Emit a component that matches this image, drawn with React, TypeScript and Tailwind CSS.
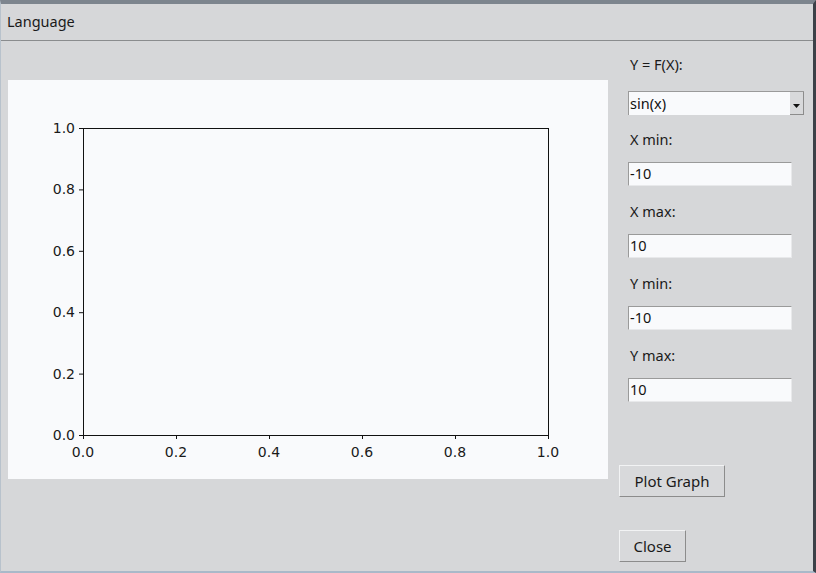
import React from 'react';

const font = { fontFamily: '"Noto Sans", "Open Sans", sans-serif' };

const yTicks = [
  { v: '1.0', y: 48 },
  { v: '0.8', y: 109.4 },
  { v: '0.6', y: 170.8 },
  { v: '0.4', y: 232.2 },
  { v: '0.2', y: 293.6 },
  { v: '0.0', y: 355 },
];

const xTicks = [
  { v: '0.0', x: 75 },
  { v: '0.2', x: 168 },
  { v: '0.4', x: 261 },
  { v: '0.6', x: 354 },
  { v: '0.8', x: 447 },
  { v: '1.0', x: 540 },
];

function Plot() {
  return (
    <div className="w-[600px] h-[399px] bg-[#f9fafc]">
      <svg width="600" height="399" viewBox="0 0 600 399">
        <rect x="75.5" y="48.5" width="465" height="307" fill="none" stroke="#111" strokeWidth="1" />
        {yTicks.map((t) => (
          <g key={t.v}>
            <line x1="71" x2="75" y1={t.y + 0.5} y2={t.y + 0.5} stroke="#111" strokeWidth="1" />
            <text
              x="67"
              y={t.y + 5}
              textAnchor="end"
              fontSize="14"
              fill="#1a1a1a"
              fontFamily="DejaVu Sans, sans-serif"
            >
              {t.v}
            </text>
          </g>
        ))}
        {xTicks.map((t) => (
          <g key={t.v}>
            <line x1={t.x + 0.5} x2={t.x + 0.5} y1="355" y2="359" stroke="#111" strokeWidth="1" />
            <text
              x={t.x}
              y="377"
              textAnchor="middle"
              fontSize="14"
              fill="#1a1a1a"
              fontFamily="DejaVu Sans, sans-serif"
            >
              {t.v}
            </text>
          </g>
        ))}
      </svg>
    </div>
  );
}

function Field({ value }: { value: string }) {
  return (
    <div className="ml-[9px] w-[164px] h-[24px] bg-[#f9fafc] border-t border-l border-[#9a9a9a] border-r-[#e8e9eb] border-b-[#e8e9eb] border-r border-b flex items-center pl-[1px] text-[14.5px] text-[#111]">
      {value}
    </div>
  );
}

function Label({ text, className }: { text: string; className?: string }) {
  return <div className={`ml-[11px] h-[20px] leading-[20px] text-[14.5px] text-[#1a1a1a] ${className ?? ''}`}>{text}</div>;
}

function Button({ text, w }: { text: string; w: string }) {
  return (
    <button
      className={`${w} h-[32px] bg-[#d8d9db] border border-t-[#f2f3f4] border-l-[#f2f3f4] border-r-[#8c8c8c] border-b-[#8c8c8c] text-[15px] text-[#1a1a1a] flex items-center justify-center`}
    >
      {text}
    </button>
  );
}

export default function App() {
  return (
    <div
      className="w-[816px] h-[573px] bg-[#d6d7d9] border-t-[4px] border-t-[#7d858e] border-r-[3px] border-r-[#3c4148] border-b-[2px] border-b-[#a9b9c9] border-l border-l-[#b8c2cc] flex flex-col overflow-hidden"
      style={font}
    >
      <div className="h-[37px] border-b border-[#8a8c8e] flex items-center pl-[6px] text-[14.5px] text-[#1a1a1a]">
        Language
      </div>
      <div className="flex flex-row">
        <div className="pl-[7px] pt-[39px]">
          <Plot />
        </div>
        <div className="flex flex-col ml-[11px]">
          <Label text="Y = F(X):" className="mt-[13px]" />
          <div className="mt-[17px] ml-[9px] w-[176px] h-[24px] bg-[#f9fafc] border-t border-l border-[#9a9a9a] border-r-[#e8e9eb] border-b-[#e8e9eb] flex items-center">
            <span className="flex-1 pl-[1px] text-[14.5px] text-[#111]">sin(x)</span>
            <div className="w-[14px] h-[23px] bg-[#d8d9db] border-r border-b border-[#8c8c8c] flex items-end justify-center pb-[6px]">
              <svg width="7" height="4" viewBox="0 0 7 4">
                <polygon points="0,0 7,0 3.5,4" fill="#111" />
              </svg>
            </div>
          </div>
          <Label text="X min:" className="mt-[14px]" />
          <div className="mt-[13px]">
            <Field value="-10" />
          </div>
          <Label text="X max:" className="mt-[15px]" />
          <div className="mt-[13px]">
            <Field value="10" />
          </div>
          <Label text="Y min:" className="mt-[15px]" />
          <div className="mt-[13px]">
            <Field value="-10" />
          </div>
          <Label text="Y max:" className="mt-[15px]" />
          <div className="mt-[13px]">
            <Field value="10" />
          </div>
          <div className="mt-[63px]">
            <Button text="Plot Graph" w="w-[106px]" />
          </div>
          <div className="mt-[33px]">
            <Button text="Close" w="w-[67px]" />
          </div>
        </div>
      </div>
    </div>
  );
}
